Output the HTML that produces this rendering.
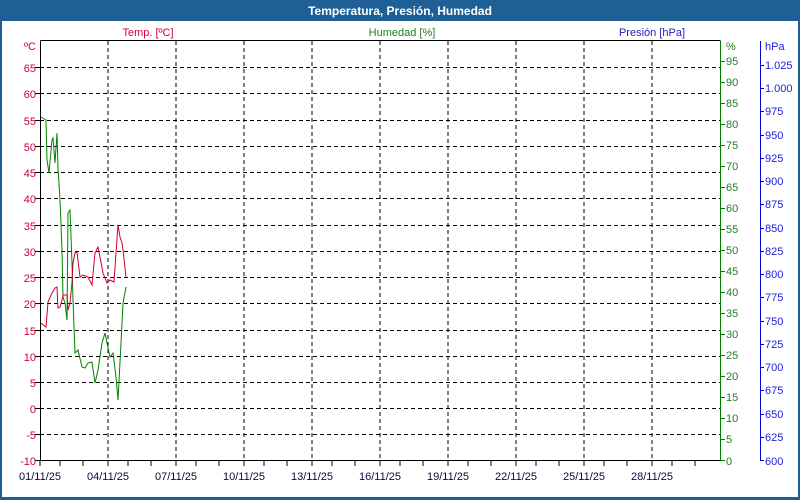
<!DOCTYPE html>
<html><head><meta charset="utf-8"><style>
html,body{margin:0;padding:0;background:#fff;}
svg{display:block;font-family:"Liberation Sans","DejaVu Sans",sans-serif;}
</style></head><body>
<svg width="800" height="500" xmlns="http://www.w3.org/2000/svg">
<rect x="0" y="0" width="800" height="500" fill="#1e5f96"/>
<rect x="2" y="21" width="796" height="476" fill="#fff"/>
<text x="400" y="15" fill="#fff" font-size="12" font-weight="bold" text-anchor="middle">Temperatura, Presión, Humedad</text>
<g font-size="11">
<text x="148" y="36" fill="#d0003a" text-anchor="middle">Temp. [ºC]</text>
<text x="402" y="36" fill="#208020" text-anchor="middle">Humedad [%]</text>
<text x="652" y="36" fill="#2020c0" text-anchor="middle">Presión [hPa]</text>
</g>
<g stroke="#000" stroke-width="1" stroke-dasharray="4,3" fill="none">
<path d="M108 41V460M176 41V460M244 41V460M312 41V460M380 41V460M448 41V460M516 41V460M584 41V460M652 41V460"/>
<path d="M40 67.5H720M40 93.5H720M40 120.5H720M40 146.5H720M40 172.5H720M40 198.5H720M40 225.5H720M40 251.5H720M40 277.5H720M40 303.5H720M40 330.5H720M40 356.5H720M40 382.5H720M40 408.5H720M40 434.5H720"/>
</g>
<path d="M40.5 40.5H720.5M40.5 40.5V460.5H720.5" stroke="#000" fill="none"/>
<path d="M60 460V466M83 460V466M128 460V466M151 460V466M196 460V466M219 460V466M264 460V466M287 460V466M332 460V466M355 460V466M400 460V466M423 460V466M468 460V466M491 460V466M536 460V466M559 460V466M604 460V466M627 460V466M672 460V466M695 460V466M40 460V466M108 460V466M176 460V466M244 460V466M312 460V466M380 460V466M448 460V466M516 460V466M584 460V466M652 460V466" stroke="#000"/>
<path d="M35 67.5H40M35 93.5H40M35 120.5H40M35 146.5H40M35 172.5H40M35 198.5H40M35 225.5H40M35 251.5H40M35 277.5H40M35 303.5H40M35 330.5H40M35 356.5H40M35 382.5H40M35 408.5H40M35 434.5H40M35 460.5H40" stroke="#000"/>
<path d="M720.5 41V461M720 460.5h5M720 439.5h5M720 418.5h5M720 397.5h5M720 376.5h5M720 355.5h5M720 334.5h5M720 313.5h5M720 292.5h5M720 271.5h5M720 250.5h5M720 229.5h5M720 208.5h5M720 187.5h5M720 166.5h5M720 145.5h5M720 124.5h5M720 103.5h5M720 82.5h5M720 61.5h5" stroke="#008000" fill="none"/>
<path d="M760.5 41V461M760 460.5h4M760 437.5h4M760 414.5h4M760 390.5h4M760 367.5h4M760 344.5h4M760 321.5h4M760 297.5h4M760 274.5h4M760 251.5h4M760 228.5h4M760 204.5h4M760 181.5h4M760 158.5h4M760 135.5h4M760 111.5h4M760 88.5h4M760 65.5h4" stroke="#0000e0" fill="none"/>
<g font-size="11" fill="#d0003a" text-anchor="end">
<text x="36" y="50">ºC</text>
<text x="36" y="72">65</text><text x="36" y="98">60</text><text x="36" y="125">55</text><text x="36" y="151">50</text><text x="36" y="177">45</text><text x="36" y="203">40</text><text x="36" y="230">35</text><text x="36" y="256">30</text><text x="36" y="282">25</text><text x="36" y="308">20</text><text x="36" y="335">15</text><text x="36" y="361">10</text><text x="36" y="387">5</text><text x="36" y="413">0</text><text x="36" y="439">-5</text><text x="36" y="465">-10</text>
</g>
<g font-size="11" fill="#208020">
<text x="726" y="50">%</text>
<text x="726" y="65">95</text><text x="726" y="86">90</text><text x="726" y="107">85</text><text x="726" y="128">80</text><text x="726" y="149">75</text><text x="726" y="170">70</text><text x="726" y="191">65</text><text x="726" y="212">60</text><text x="726" y="233">55</text><text x="726" y="254">50</text><text x="726" y="275">45</text><text x="726" y="296">40</text><text x="726" y="317">35</text><text x="726" y="338">30</text><text x="726" y="359">25</text><text x="726" y="380">20</text><text x="726" y="401">15</text><text x="726" y="422">10</text><text x="726" y="443">5</text><text x="726" y="465">0</text>
</g>
<g font-size="11" fill="#2020e0">
<text x="765" y="50">hPa</text>
<text x="765" y="69">1.025</text><text x="765" y="92">1.000</text><text x="765" y="115">975</text><text x="765" y="139">950</text><text x="765" y="162">925</text><text x="765" y="185">900</text><text x="765" y="208">875</text><text x="765" y="232">850</text><text x="765" y="255">825</text><text x="765" y="278">800</text><text x="765" y="301">775</text><text x="765" y="325">750</text><text x="765" y="348">725</text><text x="765" y="371">700</text><text x="765" y="394">675</text><text x="765" y="418">650</text><text x="765" y="441">625</text><text x="765" y="465">600</text>
</g>
<g font-size="11" fill="#0a0a3a" text-anchor="middle">
<text x="40" y="480">01/11/25</text><text x="108" y="480">04/11/25</text><text x="176" y="480">07/11/25</text><text x="244" y="480">10/11/25</text><text x="312" y="480">13/11/25</text><text x="380" y="480">16/11/25</text><text x="448" y="480">19/11/25</text><text x="516" y="480">22/11/25</text><text x="584" y="480">25/11/25</text><text x="652" y="480">28/11/25</text>
</g>
<polyline fill="none" stroke="#008000" stroke-width="1" points="41,117 46,120 47,160 49,173 52,140 53,138 55,163 57,133 58,168 60,200 62,250 63,297 65,303 67,320 68,213 70,210 72,263 73,300 75,353 78,350 82,367 85,368 88,363 92,362 95,383 98,370 102,343 105,333 107,343 110,357 113,353 116,377 118,400 121,343 123,303 126,287"/>
<polyline fill="none" stroke="#d0002a" stroke-width="1" points="41,323 46,327 48,302 52,293 55,288 57,287 58,308 60,307 62,300 63,295 67,295 68,310 70,303 72,283 73,263 75,253 77,252 80,277 83,275 88,277 92,285 95,253 98,247 100,257 103,273 107,283 110,280 114,282 116,253 118,225 120,237 122,243 123,250 126,277"/>
</svg>
</body></html>
